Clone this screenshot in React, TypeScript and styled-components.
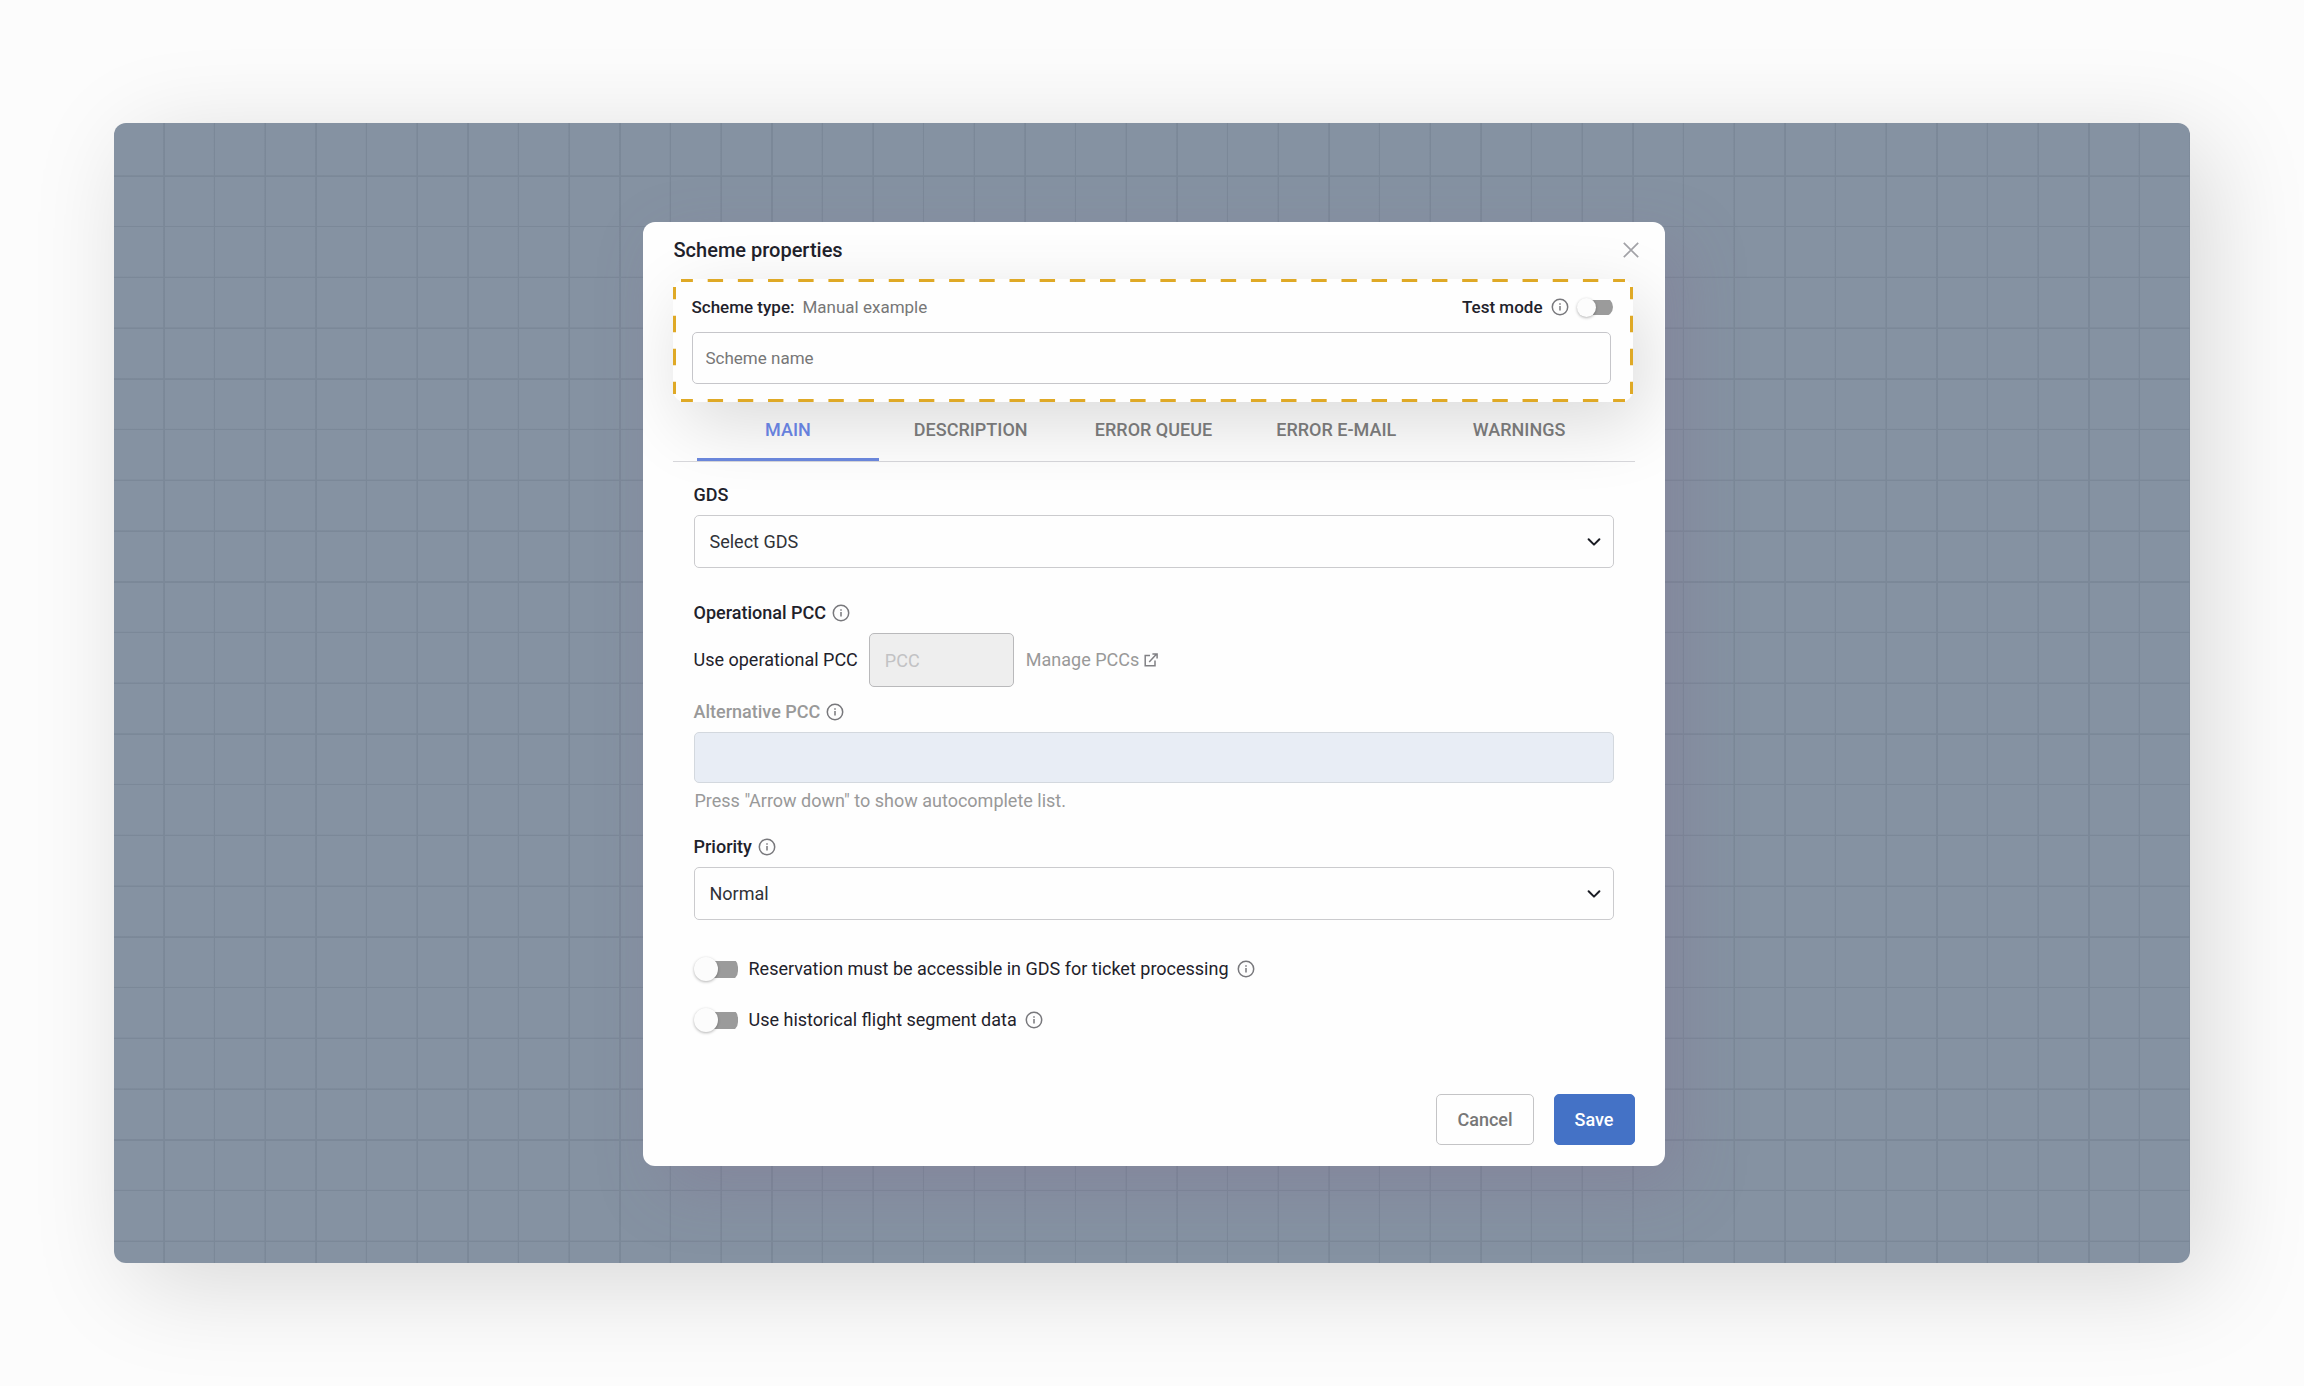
import React, { useState } from 'react';
import styled, { createGlobalStyle } from 'styled-components';

const GlobalStyle = createGlobalStyle`
  *, *::before, *::after { box-sizing: border-box; }
  body {
    margin: 0;
    background: #fcfcfc;
    color: #1f222b;
    font-family: Roboto, "Noto Sans", sans-serif;
    font-size: 18px;
    line-height: 24px;
  }
  button, input, select { font: inherit; color: inherit; }
`;

const Page = styled.main`
  display: flex;
  min-height: 100vh;
  padding: 123px 114px;
`;

const Canvas = styled.div`
  flex: 1;
  display: flex;
  justify-content: center;
  align-items: flex-start;
  padding: 99px 0 96px 3px;
  border-radius: 12px;
  background-color: #8592a2;
  background-image:
    repeating-linear-gradient(to right, transparent 0, transparent calc(2.44% - 2px), #7b8898 calc(2.44% - 1px), #7b8898 2.44%),
    repeating-linear-gradient(to bottom, transparent 0, transparent calc(4.45% - 2px), #7b8898 calc(4.45% - 1px), #7b8898 4.45%);
  background-position: 0 0, 0 3px;
  box-shadow: 18px 20px 100px rgba(0, 0, 0, 0.15);
`;

const Dialog = styled.form`
  width: 1022px;
  max-width: 100%;
  padding: 12px 30px 21px;
  border-radius: 12px;
  background: #fefefe;
  box-shadow: 18px 22px 64px rgba(128, 100, 140, 0.26);
`;

const Header = styled.header`
  display: flex;
  align-items: center;
  justify-content: space-between;
  height: 32px;
  padding-left: 1px;
  margin-bottom: 13px;
`;

const Title = styled.h1`
  margin: 0;
  font-size: 20px;
  line-height: 32px;
  font-weight: 500;
`;

const CloseButton = styled.button`
  display: grid;
  place-items: center;
  width: 32px;
  height: 32px;
  margin-right: -12px;
  padding: 0;
  border: 0;
  background: none;
  color: #a3a3a8;
`;

const Highlight = styled.section`
  position: relative;
  margin-right: 2px;
  padding: 16px 22px 18px 19px;
  border-radius: 12px;
  background: #fefefe;
  box-shadow: 10px 22px 72px rgba(0, 0, 0, 0.14);
  clip-path: inset(-57px -32px -120px -30px);
`;

const Dashes = styled.svg<{ $vertical?: boolean; $end?: boolean }>`
  position: absolute;
  overflow: visible;
  ${(p) => (p.$vertical
    ? `top: 8px; width: 3px; height: calc(100% - 16px); ${p.$end ? 'right' : 'left'}: 0;`
    : `left: 8px; height: 3px; width: calc(100% - 16px); ${p.$end ? 'bottom' : 'top'}: 0;`)}
  line { stroke: #dfa926; stroke-width: 3; }
`;

const Row = styled.div<{ $gap?: number }>`
  display: flex;
  align-items: center;
  gap: ${(p) => p.$gap ?? 8}px;
`;

const SummaryRow = styled(Row)`
  justify-content: space-between;
  margin-bottom: 13px;
  font-size: 17px;
`;

const Strong = styled.span`
  font-weight: 500;
`;

const Muted = styled.span`
  color: #777;
`;

const TextInput = styled.input`
  display: block;
  width: 100%;
  height: 52px;
  padding: 0 13px;
  border: 1px solid #c6c6ca;
  border-radius: 5px;
  background: #fefefe;
  font-size: 17px;
  &::placeholder { color: #777; opacity: 1; }
`;

const PccInput = styled(TextInput)`
  width: 145px;
  height: 54px;
  margin: 0 4px 0 3px;
  padding: 0 15px;
  border-color: #b9b9bb;
  background: #eee;
  font-size: 18px;
  &::placeholder { color: #c2c2c4; }
`;

const AltInput = styled(TextInput)`
  height: 51px;
  border-color: #d3d8de;
  background: #e8edf5;
`;

const Tabs = styled.nav`
  display: flex;
  height: 60px;
  padding: 0 24px;
  border-bottom: 1px solid #d8d8dc;
`;

const Tab = styled.button<{ $active?: boolean }>`
  position: relative;
  flex: 1;
  padding: 0 0 1px;
  border: 0;
  border-bottom: 3px solid ${(p) => (p.$active ? '#6a86da' : 'transparent')};
  background: none;
  color: ${(p) => (p.$active ? '#6680dc' : '#777')};
  font-weight: 500;
`;

const Body = styled.div`
  padding: 21px 21px 0;
`;

const Field = styled.div<{ $space: number }>`
  margin-bottom: ${(p) => p.$space}px;
`;

const Label = styled.label<{ $muted?: boolean }>`
  font-weight: 500;
  color: ${(p) => (p.$muted ? '#999' : 'inherit')};
`;

const LabelRow = styled(Row)`
  gap: 6px;
  margin-bottom: 8px;
`;

const Plain = styled.label`
  white-space: nowrap;
`;

const SelectBox = styled.div`
  display: grid;
  align-items: center;
  > * { grid-area: 1 / 1; }
  > svg { justify-self: end; margin-right: 13px; pointer-events: none; }
`;

const Select = styled.select`
  appearance: none;
  width: 100%;
  height: 53px;
  padding: 0 15px;
  border: 1px solid #cbcbce;
  border-radius: 5px;
  background: #fefefe;
  color: #303238;
`;

const Link = styled.a`
  display: flex;
  align-items: center;
  gap: 5px;
  color: #999;
  text-decoration: none;
`;

const Hint = styled.p`
  margin: 6px 1px 0;
  color: #999;
`;

const Switch = styled.input<{ $small?: boolean }>`
  appearance: none;
  display: flex;
  align-items: center;
  flex: none;
  width: ${(p) => (p.$small ? 36 : 44)}px;
  height: ${(p) => (p.$small ? 20 : 24)}px;
  margin: 0 ${(p) => (p.$small ? -2 : 0)}px 0 0;
  background: linear-gradient(#9b9b9b, #9b9b9b) right center / calc(100% - 4px) ${(p) => (p.$small ? 15 : 17)}px no-repeat;
  border-radius: 10px;
  &::before {
    content: '';
    width: ${(p) => (p.$small ? 19 : 24)}px;
    height: ${(p) => (p.$small ? 19 : 24)}px;
    border-radius: 50%;
    background: #fcfcfc;
    box-shadow: 0 1px 3px rgba(0, 0, 0, 0.3);
  }
  &:checked { justify-content: flex-end; }
`;

const SwitchRow = styled(Row)`
  height: 24px;
  margin-bottom: 27px;
  > label { margin-left: 3px; }
`;

const Footer = styled.footer`
  display: flex;
  justify-content: flex-end;
  gap: 20px;
  padding-top: 35px;
`;

const Button = styled.button<{ $primary?: boolean }>`
  height: 51px;
  padding: 0 20px;
  border: 1px solid ${(p) => (p.$primary ? '#4472c6' : '#c4c4c6')};
  border-radius: 5px;
  background: ${(p) => (p.$primary ? '#4472c6' : '#fefefe')};
  color: ${(p) => (p.$primary ? '#fff' : '#777')};
  font-weight: 500;
`;

const InfoIcon = () => (
  <svg width="18" height="18" viewBox="0 0 18 18" fill="none" stroke="#78787c" aria-hidden="true">
    <circle cx="9" cy="9" r="7.7" strokeWidth="1.5" />
    <path d="M9 8v4.6M9 5.2v1.6" strokeWidth="1.5" />
  </svg>
);

const Chevron = () => (
  <svg width="14" height="10" viewBox="0 0 14 10" fill="none" stroke="#1b1d24" strokeWidth="2" strokeLinecap="round" strokeLinejoin="round" aria-hidden="true">
    <path d="M1.6 2.2 7 7.6l5.4-5.4" />
  </svg>
);

const ExternalIcon = () => (
  <svg width="14" height="14" viewBox="0 0 14 14" fill="none" stroke="#808084" strokeWidth="1.5" aria-hidden="true">
    <path d="M6 2.6H1.2v10.2H11V7.6M5.2 9l7.4-8M8.4.9h4.7v4.7" />
  </svg>
);

const CloseIcon = () => (
  <svg width="16" height="16" viewBox="0 0 16 16" fill="none" stroke="currentColor" strokeWidth="1.7" aria-hidden="true">
    <path d="M.8.8l14.4 14.4M15.2.8.8 15.2" />
  </svg>
);

const DashedFrame = () => (
  <>
    {[false, true].map((end) => (
      <React.Fragment key={String(end)}>
        <Dashes $end={end} aria-hidden="true">
          <line x1="0" y1="1.5" x2="100%" y2="1.5" pathLength={944} strokeDasharray="15.4 14.78" strokeDashoffset="3.5" />
        </Dashes>
        <Dashes $vertical $end={end} aria-hidden="true">
          <line x1="1.5" y1="0" x2="1.5" y2="100%" pathLength={107} strokeDasharray="16.4 16.6" strokeDashoffset="4.2" />
        </Dashes>
      </React.Fragment>
    ))}
  </>
);

const TAB_NAMES = ['MAIN', 'DESCRIPTION', 'ERROR QUEUE', 'ERROR E-MAIL', 'WARNINGS'];

export default function App() {
  const [tab, setTab] = useState('MAIN');

  return (
    <>
      <GlobalStyle />
      <Page>
        <Canvas>
          <Dialog onSubmit={(e) => e.preventDefault()}>
            <Header>
              <Title>Scheme properties</Title>
              <CloseButton type="button" aria-label="Close"><CloseIcon /></CloseButton>
            </Header>

            <Highlight>
              <DashedFrame />
              <SummaryRow>
                <Row><Strong>Scheme type:</Strong><Muted>Manual example</Muted></Row>
                <Row>
                  <Label htmlFor="test-mode">Test mode</Label>
                  <InfoIcon />
                  <Switch $small type="checkbox" id="test-mode" />
                </Row>
              </SummaryRow>
              <TextInput type="text" aria-label="Scheme name" placeholder="Scheme name" />
            </Highlight>

            <Tabs>
              {TAB_NAMES.map((name) => (
                <Tab key={name} type="button" $active={name === tab} onClick={() => setTab(name)}>{name}</Tab>
              ))}
            </Tabs>

            <Body>
              <Field $space={33}>
                <LabelRow><Label htmlFor="gds">GDS</Label></LabelRow>
                <SelectBox>
                  <Select id="gds"><option>Select GDS</option></Select>
                  <Chevron />
                </SelectBox>
              </Field>

              <Field $space={13}>
                <LabelRow><Strong>Operational PCC</Strong><InfoIcon /></LabelRow>
                <Row>
                  <Plain htmlFor="pcc">Use operational PCC</Plain>
                  <PccInput id="pcc" type="text" placeholder="PCC" disabled />
                  <Link href="#pccs">Manage PCCs<ExternalIcon /></Link>
                </Row>
              </Field>

              <Field $space={22}>
                <LabelRow><Label $muted htmlFor="alt-pcc">Alternative PCC</Label><InfoIcon /></LabelRow>
                <AltInput id="alt-pcc" type="text" disabled />
                <Hint>Press "Arrow down" to show autocomplete list.</Hint>
              </Field>

              <Field $space={37}>
                <LabelRow><Label htmlFor="priority">Priority</Label><InfoIcon /></LabelRow>
                <SelectBox>
                  <Select id="priority"><option>Normal</option></Select>
                  <Chevron />
                </SelectBox>
              </Field>

              <SwitchRow>
                <Switch type="checkbox" id="reservation" />
                <Plain htmlFor="reservation">Reservation must be accessible in GDS for ticket processing</Plain>
                <InfoIcon />
              </SwitchRow>
              <SwitchRow>
                <Switch type="checkbox" id="historical" />
                <Plain htmlFor="historical">Use historical flight segment data</Plain>
                <InfoIcon />
              </SwitchRow>
            </Body>

            <Footer>
              <Button type="button">Cancel</Button>
              <Button type="submit" $primary>Save</Button>
            </Footer>
          </Dialog>
        </Canvas>
      </Page>
    </>
  );
}
